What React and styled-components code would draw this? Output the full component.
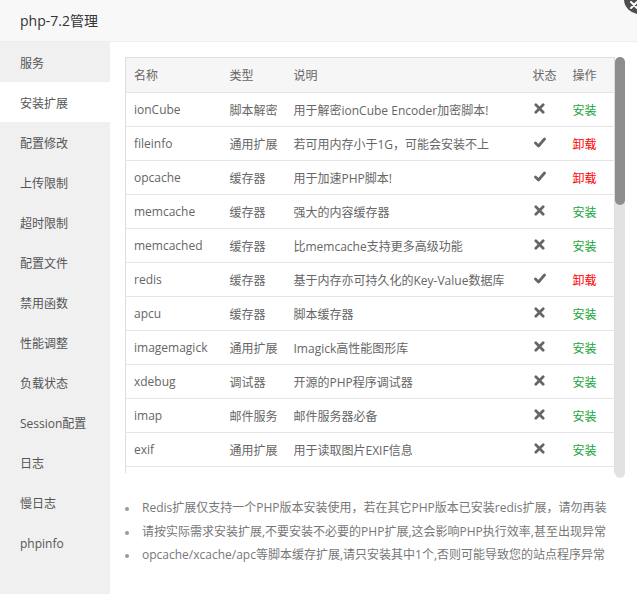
import styled, { createGlobalStyle } from "styled-components";

const GlobalStyle = createGlobalStyle`
  html, body {
    margin: 0;
    padding: 0;
    background: #fff;
    overflow: hidden;
  }
  body {
    font-family: "Open Sans", "Noto Sans CJK SC", sans-serif;
    font-size: 12px;
    color: #666;
  }
`;

const menu = [
  "服务", "安装扩展", "配置修改", "上传限制", "超时限制", "配置文件", "禁用函数",
  "性能调整", "负载状态", "Session配置", "日志", "慢日志", "phpinfo",
];

const exts = [
  ["ionCube", "脚本解密", "用于解密ionCube Encoder加密脚本!", false],
  ["fileinfo", "通用扩展", "若可用内存小于1G，可能会安装不上", true],
  ["opcache", "缓存器", "用于加速PHP脚本!", true],
  ["memcache", "缓存器", "强大的内容缓存器", false],
  ["memcached", "缓存器", "比memcache支持更多高级功能", false],
  ["redis", "缓存器", "基于内存亦可持久化的Key-Value数据库", true],
  ["apcu", "缓存器", "脚本缓存器", false],
  ["imagemagick", "通用扩展", "Imagick高性能图形库", false],
  ["xdebug", "调试器", "开源的PHP程序调试器", false],
  ["imap", "邮件服务", "邮件服务器必备", false],
  ["exif", "通用扩展", "用于读取图片EXIF信息", false],
];

const tips = [
  "Redis扩展仅支持一个PHP版本安装使用，若在其它PHP版本已安装redis扩展，请勿再装",
  "请按实际需求安装扩展,不要安装不必要的PHP扩展,这会影响PHP执行效率,甚至出现异常",
  "opcache/xcache/apc等脚本缓存扩展,请只安装其中1个,否则可能导致您的站点程序异常",
];

function CrossIcon() {
  return (
    <svg width="11" height="11" viewBox="0 0 12 12">
      <path d="M2 2 L10 10 M10 2 L2 10" stroke="#666" strokeWidth="3" strokeLinecap="round" />
    </svg>
  );
}

function CheckIcon() {
  return (
    <svg width="12" height="11" viewBox="0 0 12 11">
      <path d="M1.5 6 L4.5 9 L10.5 2" fill="none" stroke="#666" strokeWidth="2.8" strokeLinecap="round" strokeLinejoin="round" />
    </svg>
  );
}

export default function App() {
  return (
    <Layer>
      <GlobalStyle />
      <TitleBar>php-7.2管理</TitleBar>
      <CloseBtn>
        <svg width="10" height="10" viewBox="0 0 10 10">
          <path d="M2 2 L8 8 M8 2 L2 8" stroke="#fff" strokeWidth="2" strokeLinecap="round" />
        </svg>
      </CloseBtn>
      <Body>
        <SideMenu>
          {menu.map((m) => (
            <MenuItem key={m} $active={m === "安装扩展"}>{m}</MenuItem>
          ))}
        </SideMenu>
        <Content>
          <TablePanel>
            <Viewport>
              <Table>
                <colgroup>
                  <col style={{ width: 96 }} />
                  <col style={{ width: 64 }} />
                  <col style={{ width: 239 }} />
                  <col style={{ width: 40 }} />
                  <col style={{ width: 50 }} />
                </colgroup>
                <thead>
                  <tr>
                    <Th>名称</Th>
                    <Th>类型</Th>
                    <Th>说明</Th>
                    <Th>状态</Th>
                    <Th>操作</Th>
                  </tr>
                </thead>
                <tbody>
                  {exts.map(([name, type, desc, installed]) => (
                    <tr key={name}>
                      <Td>{name}</Td>
                      <Td>{type}</Td>
                      <Td>{desc}</Td>
                      <Td><StatusWrap>{installed ? <CheckIcon /> : <CrossIcon />}</StatusWrap></Td>
                      <Td><Action $remove={installed}>{installed ? "卸载" : "安装"}</Action></Td>
                    </tr>
                  ))}
                  <tr>
                    <Td colSpan={5} />
                  </tr>
                </tbody>
              </Table>
            </Viewport>
            <ScrollTrack>
              <ScrollThumb />
            </ScrollTrack>
          </TablePanel>
          <Tips>
            {tips.map((t) => (
              <Tip key={t}>{t}</Tip>
            ))}
          </Tips>
        </Content>
      </Body>
    </Layer>
  );
}

const Layer = styled.div`
  position: relative;
  width: 637px;
  height: 594px;
  overflow: hidden;
  display: flex;
  flex-direction: column;
`;

const TitleBar = styled.div`
  height: 41px;
  line-height: 41px;
  padding-left: 20px;
  background: #f8f8f8;
  border-bottom: 1px solid #eee;
  font-size: 14px;
  color: #333;
`;

const CloseBtn = styled.div`
  position: absolute;
  top: -16px;
  right: -17px;
  width: 30px;
  height: 30px;
  border-radius: 50%;
  background: #4d4d4d;
  display: flex;
  align-items: flex-end;
  justify-content: flex-start;
  padding: 0 0 4px 5px;
  box-sizing: border-box;
`;

const Body = styled.div`
  flex: 1;
  display: flex;
  min-height: 0;
`;

const SideMenu = styled.div`
  width: 110px;
  background: #f0f0f0;
  display: flex;
  flex-direction: column;
`;

const MenuItem = styled.div`
  height: 40px;
  box-sizing: border-box;
  padding: 3px 0 0 20px;
  line-height: 37px;
  font-size: 12px;
  color: #555;
  background: ${(p) => (p.$active ? "#fff" : "transparent")};
`;

const Content = styled.div`
  flex: 1;
  padding: 15px 12px 0 15px;
  display: flex;
  flex-direction: column;
`;

const TablePanel = styled.div`
  display: flex;
  height: 421px;
  width: 500px;
`;

const Viewport = styled.div`
  width: 490px;
  height: 416px;
  overflow: hidden;
`;

const ScrollTrack = styled.div`
  width: 10px;
  height: 421px;
  background: #e2e2e2;
  border-radius: 5px;
  display: flex;
  flex-direction: column;
`;

const ScrollThumb = styled.div`
  height: 148px;
  background: #8d8d8d;
  border-radius: 5px;
`;

const Table = styled.table`
  width: 490px;
  table-layout: fixed;
  border-collapse: collapse;
  border: 1px solid #ddd;
  font-size: 12px;
  color: #666;
`;

const Th = styled.th`
  height: 34px;
  padding: 0 8px;
  text-align: left;
  font-weight: normal;
  background: #f6f6f6;
  border-bottom: 1px solid #e4e4e4;
  white-space: nowrap;
`;

const Td = styled.td`
  height: 33px;
  padding: 0 8px;
  border-bottom: 1px solid #e6e6e6;
  white-space: nowrap;
  overflow: hidden;
`;

const StatusWrap = styled.span`
  display: inline-flex;
  align-items: center;
  padding-left: 1px;
  padding-top: 2px;
`;

const Action = styled.span`
  color: ${(p) => (p.$remove ? "#f00" : "#20a53a")};
`;

const Tips = styled.ul`
  margin: 18px 0 0 0;
  padding: 0 0 0 14px;
  color: #777;
  font-size: 12px;
  li::marker {
    color: #999;
    font-size: 10px;
  }
`;

const Tip = styled.li`
  line-height: 23.5px;
  white-space: nowrap;
  padding-left: 3px;
`;
